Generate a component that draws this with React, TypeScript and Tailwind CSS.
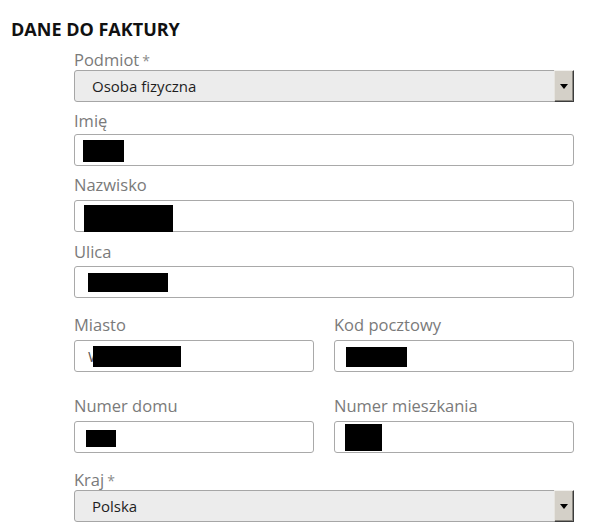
import React from "react";

function Label({
  children,
  required,
  className,
}: {
  children: React.ReactNode;
  required?: boolean;
  className: string;
}) {
  return (
    <div className={"h-[20px] text-[16.5px] leading-[20px] text-[#7a7a7a] whitespace-nowrap " + className}>
      {children}
      {required && <span className="ml-[3px] text-[14px] text-[#8c8c8c]">*</span>}
    </div>
  );
}

function Select({ value }: { value: string }) {
  return (
    <div className="flex h-[32px] w-[500px] rounded-[3px] border border-[#a6a6a6] bg-[#ececec]">
      <div className="flex-1 pl-[17px] text-[15px] leading-[30px] text-[#1e1e1e]">{value}</div>
      <div className="-my-[1px] -mr-[1px] flex h-[32px] w-[20px] items-center justify-center border-l border-t border-l-[#e6e4df] border-t-[#f2f1ee] border-r border-b border-r-[#3c3c3c] border-b-[#3c3c3c] bg-[#d4d0c8] shadow-[inset_-1px_-1px_0_#8a8780]">
        <svg width="8" height="5" viewBox="0 0 8 5">
          <path d="M0 0 H8 L4 5 Z" fill="#000" />
        </svg>
      </div>
    </div>
  );
}

function Input({ box, children }: { box: string; children?: React.ReactNode }) {
  return (
    <div className="relative flex h-[32px] items-center rounded-[3px] border border-[#a9a9a9] bg-white pl-[13px] text-[15px] text-[#5a5a5a]">
      {children}
      <div className={"absolute bg-black " + box} />
    </div>
  );
}

export default function App() {
  return (
    <div className="h-[529px] w-[605px] overflow-hidden bg-white font-['Open_Sans',sans-serif]">
      <h1 className="pl-[11px] pt-[17px] text-[18px] font-bold leading-[24px] text-[#111]">DANE DO FAKTURY</h1>
      <div className="ml-[74px] flex w-[500px] flex-col">
        <Label className="mt-[9px]" required>
          Podmiot
        </Label>
        <Select value="Osoba fizyczna" />

        <Label className="mt-[9px] mb-[3px]">Imię</Label>
        <Input box="left-[8px] top-[5px] w-[41px] h-[22px]" />

        <Label className="mt-[9px] mb-[5px]">Nazwisko</Label>
        <Input box="left-[9px] top-[4px] w-[89px] h-[27px]" />

        <Label className="mt-[10px] mb-[4px]">Ulica</Label>
        <Input box="left-[13px] top-[6px] w-[80px] h-[19px]" />

        <div className="mt-[17px] grid grid-cols-2 gap-x-[20px]">
          <div className="flex flex-col">
            <Label className="mb-[5px]">Miasto</Label>
            <Input box="left-[18px] top-[5px] w-[88px] h-[21px]">W</Input>
          </div>
          <div className="flex flex-col">
            <Label className="mb-[5px]">Kod pocztowy</Label>
            <Input box="left-[11px] top-[6px] w-[61px] h-[20px]" />
          </div>
        </div>

        <div className="mt-[24px] grid grid-cols-2 gap-x-[20px]">
          <div className="flex flex-col">
            <Label className="mb-[5px]">Numer domu</Label>
            <Input box="left-[11px] top-[8px] w-[30px] h-[17px]" />
          </div>
          <div className="flex flex-col">
            <Label className="mb-[5px]">Numer mieszkania</Label>
            <Input box="left-[10px] top-[2px] w-[37px] h-[27px]" />
          </div>
        </div>

        <Label className="mt-[17px]" required>
          Kraj
        </Label>
        <Select value="Polska" />
      </div>
    </div>
  );
}
